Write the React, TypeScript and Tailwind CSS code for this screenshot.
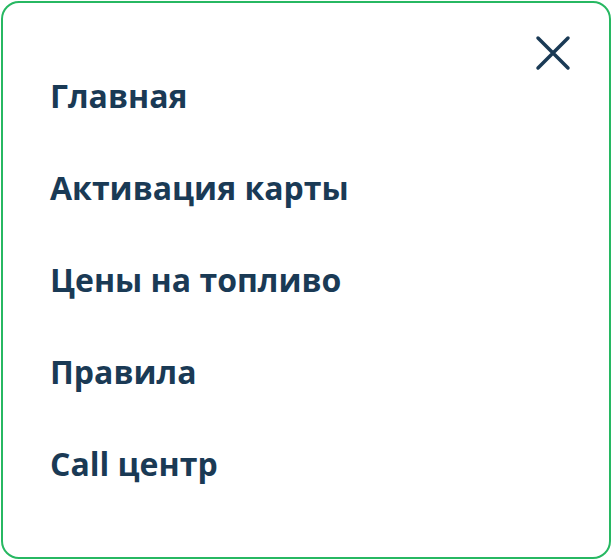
const items = ["Главная", "Активация карты", "Цены на топливо", "Правила", "Call центр"];

const App: React.FC = () => {
  return (
    <div className="w-[612px] h-[560px] bg-white p-px" style={{ fontFamily: "'Open Sans', sans-serif" }}>
      <div className="relative h-full w-full rounded-[18px] border-2 border-[#27b862] bg-white">
        <button className="absolute right-[38px] top-[32px] text-[#1a3a55]" aria-label="Закрыть">
          <svg width="36" height="36" viewBox="0 0 36 36" fill="none">
            <path d="M3 3L33 33M33 3L3 33" stroke="currentColor" strokeWidth="3.5" strokeLinecap="round" />
          </svg>
        </button>
        <nav className="flex flex-col gap-[52px] pl-[47px] pt-[73px]">
          {items.map((item) => (
            <a key={item} href="#" className="text-[32px] font-bold leading-[40px] text-[#1a3a55]">
              {item}
            </a>
          ))}
        </nav>
      </div>
    </div>
  );
};

export default App;
